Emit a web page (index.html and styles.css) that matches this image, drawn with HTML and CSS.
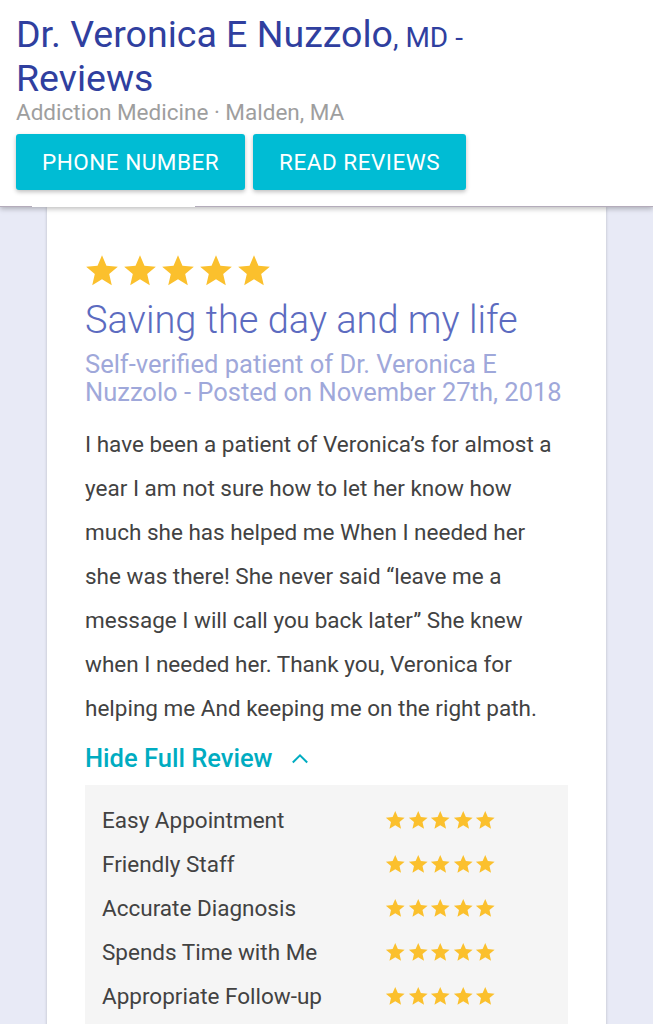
FILE: index.html
```html
<!DOCTYPE html>
<html lang="en">
<head>
  <meta charset="UTF-8" />
  <meta name="viewport" content="width=device-width, initial-scale=1.0"/>
  <title>Dr. Veronica E Nuzzolo, MD - Reviews</title>
  <link rel="stylesheet" href="styles.css">
</head>
<body>
  <svg width="0" height="0" class="defs">
    <defs>
      <symbol id="star" viewBox="0 0 24 24">
        <path d="M12 17.27L18.18 21l-1.64-7.03L22 9.24l-7.19-.61L12 2 9.19 8.63 2 9.24l5.46 4.73L5.82 21z"/>
      </symbol>
    </defs>
  </svg>

  <div class="header">
    <h1>Dr. Veronica E Nuzzolo<span class="suffix">, MD -</span> Reviews</h1>
    <p class="specialty">Addiction Medicine · Malden, MA</p>
    <div class="actions">
      <button class="btn">Phone Number</button>
      <button class="btn">Read Reviews</button>
    </div>
    <div class="tab-line"></div>
  </div>

  <div class="page">
    <div class="card">
      <div class="stars big">
        <svg><use href="#star"/></svg>
        <svg><use href="#star"/></svg>
        <svg><use href="#star"/></svg>
        <svg><use href="#star"/></svg>
        <svg><use href="#star"/></svg>
      </div>
      <h2 class="review-title">Saving the day and my life</h2>
      <p class="meta">Self-verified patient of Dr. Veronica E Nuzzolo - Posted on November 27th, 2018</p>
      <p class="review-body">I have been a patient of Veronica’s for almost a year I am not sure how to let her know how much she has helped me When I needed her she was there! She never said “leave me a message I will call you back later” She knew when I needed her. Thank you, Veronica for helping me And keeping me on the right path.</p>
      <a class="toggle">Hide Full Review
        <svg class="chevron" viewBox="0 0 20 12"><path d="M2 10.5L10 2.5l8 8"/></svg>
      </a>

      <div class="ratings">
        <div class="rating-row">
          <span class="label">Easy Appointment</span>
          <div class="stars small">
            <svg><use href="#star"/></svg><svg><use href="#star"/></svg><svg><use href="#star"/></svg><svg><use href="#star"/></svg><svg><use href="#star"/></svg>
          </div>
        </div>
        <div class="rating-row">
          <span class="label">Friendly Staff</span>
          <div class="stars small">
            <svg><use href="#star"/></svg><svg><use href="#star"/></svg><svg><use href="#star"/></svg><svg><use href="#star"/></svg><svg><use href="#star"/></svg>
          </div>
        </div>
        <div class="rating-row">
          <span class="label">Accurate Diagnosis</span>
          <div class="stars small">
            <svg><use href="#star"/></svg><svg><use href="#star"/></svg><svg><use href="#star"/></svg><svg><use href="#star"/></svg><svg><use href="#star"/></svg>
          </div>
        </div>
        <div class="rating-row">
          <span class="label">Spends Time with Me</span>
          <div class="stars small">
            <svg><use href="#star"/></svg><svg><use href="#star"/></svg><svg><use href="#star"/></svg><svg><use href="#star"/></svg><svg><use href="#star"/></svg>
          </div>
        </div>
        <div class="rating-row">
          <span class="label">Appropriate Follow-up</span>
          <div class="stars small">
            <svg><use href="#star"/></svg><svg><use href="#star"/></svg><svg><use href="#star"/></svg><svg><use href="#star"/></svg><svg><use href="#star"/></svg>
          </div>
        </div>
      </div>
    </div>
  </div>
</body>
</html>
```

FILE: styles.css
```css
body {
  font-family: Roboto, "Liberation Sans", sans-serif;
  background-color: #e8eaf6;
  margin: 0;
  height: 1024px;
  overflow: hidden;
}
.defs {
  position: absolute;
}
.header {
  position: relative;
  z-index: 2;
  background-color: #fff;
  padding: 12px 16px 16px;
  border-bottom: 1px solid #b4acbb;
  box-shadow: 0 2px 5px rgba(0, 0, 0, 0.25);
}
h1 {
  margin: 0;
  font-size: 37.5px;
  font-weight: 400;
  line-height: 44px;
  color: #303f9f;
  width: 480px;
}
.suffix {
  font-size: 28px;
  line-height: 20px;
}
.specialty {
  margin: 0;
  font-size: 22.5px;
  line-height: 25px;
  color: #9e9e9e;
}
.actions {
  display: flex;
  gap: 8px;
  margin-top: 9px;
}
.btn {
  font-family: inherit;
  background-color: #00bcd4;
  color: #fff;
  border: none;
  border-radius: 3px;
  height: 56px;
  padding: 0 26px;
  font-size: 22.5px;
  letter-spacing: 0.5px;
  text-transform: uppercase;
  box-shadow: 0 2px 4px rgba(0, 0, 0, 0.25);
}
.tab-line {
  position: absolute;
  left: 32px;
  bottom: -1px;
  width: 163px;
  height: 1px;
  background-color: #fff;
}
.page {
  padding: 0 47px;
}
.card {
  background-color: #fff;
  padding: 45px 38px 0;
  height: 820px;
  box-shadow: 0 0 3px rgba(0, 0, 0, 0.2);
}
.stars {
  display: flex;
  fill: #fbc02d;
}
.stars.big {
  margin-left: -2px;
}
.stars.big svg {
  width: 38px;
  height: 38px;
}
.stars.small svg {
  width: 22.5px;
  height: 22.5px;
}
.review-title {
  margin: 8px 0 0;
  font-size: 38px;
  font-weight: 300;
  line-height: 44px;
  color: #5c6bc0;
}
.meta {
  margin: 8px 0 0;
  font-size: 25.5px;
  line-height: 28px;
  color: #9fa8da;
}
.review-body {
  margin: 16px 0 0;
  max-width: 470px;
  font-size: 22.5px;
  line-height: 44px;
  color: #424242;
}
.toggle {
  display: flex;
  align-items: center;
  margin-top: 10px;
  font-size: 25.5px;
  font-weight: 500;
  line-height: 36px;
  color: #00acc1;
}
.chevron {
  width: 18px;
  height: 11px;
  margin-left: 18px;
  fill: none;
  stroke: #00acc1;
  stroke-width: 2.2;
}
.ratings {
  background-color: #f5f5f5;
  margin-top: 9px;
  padding: 13px 17px;
}
.rating-row {
  display: flex;
  align-items: center;
  height: 44px;
}
.label {
  width: 282px;
  font-size: 22.5px;
  color: #424242;
}
```
